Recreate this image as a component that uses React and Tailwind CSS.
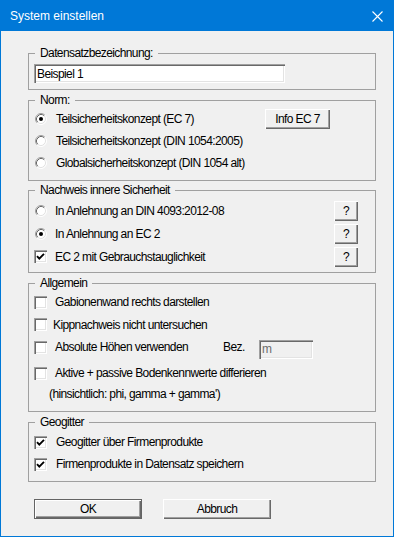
import { useState } from 'react'

const raised =
  'bg-[#f0f0f0] shadow-[inset_1px_1px_0_#fff,inset_-1px_-1px_0_#696969,inset_-2px_-2px_0_#a0a0a0]'
const sunken =
  'shadow-[inset_1px_1px_0_#a0a0a0,inset_2px_2px_0_#696969,inset_-1px_-1px_0_#fff,inset_-2px_-2px_0_#e3e3e3]'

function Radio({ checked }) {
  return (
    <svg width="12" height="12" viewBox="0 0 12 12" className="shrink-0">
      <circle cx="6" cy="6" r="5" fill="#fff" />
      <path d="M2.11 9.89 A5.5 5.5 0 0 1 9.89 2.11" fill="none" stroke="#a0a0a0" />
      <path d="M9.89 2.11 A5.5 5.5 0 0 1 2.11 9.89" fill="none" stroke="#fff" />
      <path d="M2.82 9.18 A4.5 4.5 0 0 1 9.18 2.82" fill="none" stroke="#696969" />
      <path d="M9.18 2.82 A4.5 4.5 0 0 1 2.82 9.18" fill="none" stroke="#e3e3e3" />
      {checked && <circle cx="6" cy="6" r="2" fill="#000" />}
    </svg>
  )
}

function Check({ checked }) {
  return (
    <span className={`w-[13px] h-[13px] shrink-0 bg-white ${sunken} flex items-center justify-center`}>
      {checked && (
        <svg width="13" height="13" viewBox="0 0 13 13">
          <path d="M3 6.2 L5.3 8.6 L10 3.9" fill="none" stroke="#000" strokeWidth="1.9" />
        </svg>
      )}
    </span>
  )
}

function Group({ title, className, children }) {
  return (
    <fieldset className={`w-[348px] border border-[#a0a0a0] ${className}`}>
      <legend className="ml-[6px] px-[5px] h-[14px] leading-[14px]">{title}</legend>
      {children}
    </fieldset>
  )
}

function HelpBtn() {
  return (
    <button className={`ml-auto mr-[17px] w-[24px] h-[20px] ${raised} leading-none`}>?</button>
  )
}

export default function App() {
  const [name, setName] = useState('Beispiel 1')
  const [norm, setNorm] = useState(0)
  const [inner, setInner] = useState(1)

  return (
    <div className="w-[394px] h-[537px] bg-[#f0f0f0] border border-[#0078d7] flex flex-col text-[12px] text-black font-['Liberation_Sans',Arial,sans-serif]">
      <div className="h-[30px] shrink-0 bg-[#0078d7] flex items-center pl-[9px] pr-[10px] text-white tracking-normal">
        <span>System einstellen</span>
        <svg width="11" height="11" viewBox="0 0 11 11" className="ml-auto">
          <path d="M0.5 0.5 L10.5 10.5 M10.5 0.5 L0.5 10.5" stroke="#fff" strokeWidth="1.1" />
        </svg>
      </div>

      <div className="pl-[27px] pt-[15px] flex flex-col tracking-[-0.6px]">
        <Group title="Datensatzbezeichnung:" className="h-[44px]">
          <input
            value={name}
            onChange={(e) => setName(e.target.value)}
            className={`mt-[4px] ml-[5px] w-[251px] h-[19px] bg-white pl-[3px] outline-none ${sunken}`}
          />
        </Group>

        <Group title="Norm:" className="mt-[3px] h-[88px]">
          <div className="pt-[1px] pl-[6px]">
            {[
              'Teilsicherheitskonzept (EC 7)',
              'Teilsicherheitskonzept (DIN 1054:2005)',
              'Globalsicherheitskonzept (DIN 1054 alt)',
            ].map((t, i) => (
              <div key={t} className="h-[22px] flex items-center" onClick={() => setNorm(i)}>
                <Radio checked={norm === i} />
                <span className="ml-[9px]">{t}</span>
                {i === 0 && (
                  <button className={`ml-auto mr-[45px] w-[65px] h-[20px] ${raised} leading-none`}>
                    Info EC 7
                  </button>
                )}
              </div>
            ))}
          </div>
        </Group>

        <Group title="Nachweis innere Sicherheit" className="mt-[2px] h-[90px]">
          <div className="pt-[2px]">
            <div className="h-[23px] flex items-center pl-[6px]" onClick={() => setInner(0)}>
              <Radio checked={inner === 0} />
              <span className="ml-[8px]">In Anlehnung an DIN 4093:2012-08</span>
              <HelpBtn />
            </div>
            <div className="h-[23px] flex items-center pl-[6px]" onClick={() => setInner(1)}>
              <Radio checked={inner === 1} />
              <span className="ml-[8px]">In Anlehnung an EC 2</span>
              <HelpBtn />
            </div>
            <div className="h-[23px] flex items-center pl-[5px]">
              <Check checked />
              <span className="ml-[8px]">EC 2 mit Gebrauchstauglichkeit</span>
              <HelpBtn />
            </div>
          </div>
        </Group>

        <Group title="Allgemein" className="mt-[3px] h-[136px]">
          <div className="pt-[1px] pl-[5px]">
            <div className="h-[22px] flex items-center">
              <Check />
              <span className="ml-[8px]">Gabionenwand rechts darstellen</span>
            </div>
            <div className="h-[23px] flex items-center">
              <Check />
              <span className="ml-[6px]">Kippnachweis nicht untersuchen</span>
            </div>
            <div className="h-[22px] flex items-center">
              <Check />
              <span className="ml-[8px] w-[168px]">Absolute Höhen verwenden</span>
              <span className="w-[36px]">Bez.</span>
              <span
                className={`self-start mt-[4px] w-[54px] h-[19px] pl-[3px] leading-[19px] text-[#6d6d6d] bg-[#f0f0f0] ${sunken}`}
              >
                m
              </span>
            </div>
            <div className="mt-[4px] h-[22px] flex items-center">
              <Check />
              <span className="ml-[8px]">Aktive + passive Bodenkennwerte differieren</span>
            </div>
            <div className="h-[20px] flex items-center pl-[15px]">
              (hinsichtlich: phi, gamma + gamma')
            </div>
          </div>
        </Group>

        <Group title="Geogitter" className="mt-[3px] h-[67px]">
          <div className="pt-[2px] pl-[5px]">
            <div className="h-[22px] flex items-center">
              <Check checked />
              <span className="ml-[9px]">Geogitter über Firmenprodukte</span>
            </div>
            <div className="h-[22px] flex items-center">
              <Check checked />
              <span className="ml-[9px]">Firmenprodukte in Datensatz speichern</span>
            </div>
          </div>
        </Group>

        <div className="mt-[17px] ml-[6px] flex gap-[21px]">
          <button className={`w-[108px] h-[20px] border border-[#646464] ${raised} leading-none`}>OK</button>
          <button className={`w-[108px] h-[20px] ${raised} leading-none`}>Abbruch</button>
        </div>
      </div>
    </div>
  )
}
